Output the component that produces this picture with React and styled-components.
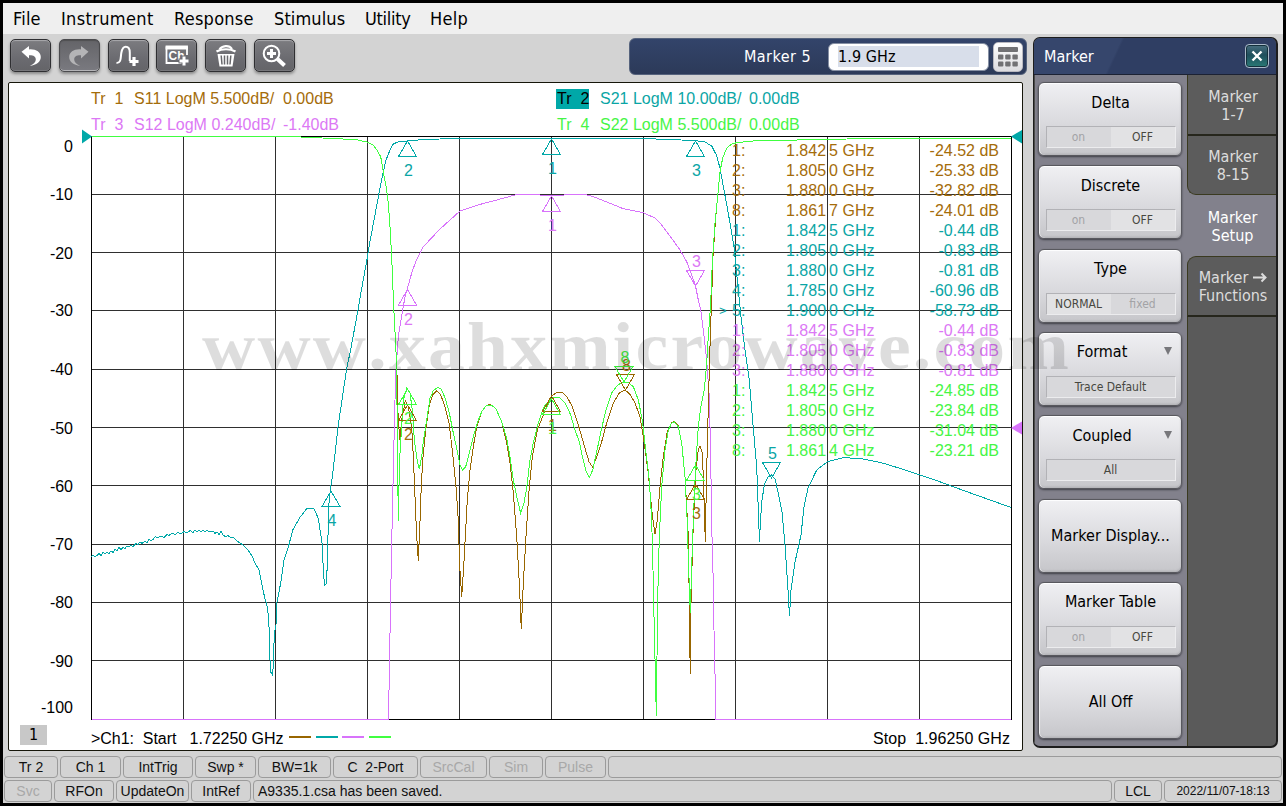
import React from "react";
import styled, { createGlobalStyle, css } from "styled-components";

const ui = '"DejaVu Sans Condensed", "DejaVu Sans", "Noto Sans", sans-serif';
const plain = '"Liberation Sans", Arial, sans-serif';

const ink = { s11: "#986600", s21: "#00a8a8", s12: "#d873fb", s22: "#40ff40" };
const label = { s11: "#a46c0a", s21: "#0aa5a5", s12: "#dc78f5", s22: "#46f546" };

const GlobalStyle = createGlobalStyle`
  * { box-sizing: border-box; }
  body { margin: 0; background: #000; }
  button { font: inherit; padding: 0; margin: 0; }
`;

const Frame = styled.div`
  position: relative;
  width: 1286px;
  height: 806px;
  padding: 3px;
  background: #000;
  overflow: hidden;
  font-family: ${ui};
`;

const Screen = styled.div`
  display: flex;
  flex-direction: column;
  width: 1280px;
  height: 800px;
  background: #d3d3d3;
`;

const MenuBar = styled.nav`
  display: flex;
  gap: 20px;
  height: 31px;
  padding-left: 10px;
  background: #efefef;
`;

const MenuItem = styled.span`
  width: ${(p) => p.$w}px;
  font-size: 18px;
  line-height: 31px;
  color: #000;
  white-space: nowrap;
  letter-spacing: ${(p) => p.$track || 0}px;
`;

const Main = styled.div`
  display: flex;
  height: 719px;
`;

const Workspace = styled.main`
  width: 1030px;
  display: flex;
  flex-direction: column;
`;

const Toolbar = styled.div`
  display: flex;
  height: 48px;
  padding: 4px 6px 0 7px;
  justify-content: space-between;
`;

const Tools = styled.div`
  display: flex;
  gap: 7.8px;
  padding-top: 1px;
`;

const Tool = styled.button`
  width: 41px;
  height: 33px;
  border: 1px solid ${(p) => (p.$pressed ? "#4b4b4e" : "#2f2f32")};
  border-radius: 5px;
  background: ${(p) =>
    p.$pressed
      ? "linear-gradient(#646468, #7a7a80)"
      : "linear-gradient(#7c7c80, #6b6b70 60%, #646468)"};
  box-shadow: inset 0 1px 1px ${(p) => (p.$pressed ? "#4f4f52" : "#aaaaad")},
    inset 0 -1px 0 ${(p) => (p.$pressed ? "#b5b5b8" : "#77777b")}, 0 2px 3px rgba(0, 0, 0, 0.35);
  display: flex;
  align-items: center;
  justify-content: center;
`;

const EntryBar = styled.div`
  display: flex;
  align-items: center;
  width: 398px;
  height: 37px;
  padding-right: 3px;
  border: 1px solid #56637d;
  border-radius: 6px;
  background: linear-gradient(#33446a, #2c3a59);
`;

const EntryLabel = styled.div`
  flex: 1;
  padding-right: 17px;
  text-align: right;
  font-size: 16px;
  color: #fff;
  letter-spacing: 0.45px;
`;

const EntryField = styled.div`
  width: 161px;
  height: 28px;
  padding: 2px 9px 0;
  border: 1px solid #8690a4;
  border-radius: 6px;
  background: #fff;
`;

const EntryValue = styled.div`
  height: 21px;
  line-height: 21px;
  font-size: 16px;
  letter-spacing: 0.1px;
  background: #d8deea;
  color: #000;
`;

const Keypad = styled.button`
  width: 30px;
  height: 30px;
  margin-left: 4px;
  border: 1px solid #b9b9c0;
  border-radius: 5px;
  background: linear-gradient(#fff, #dcdce0);
  display: flex;
  align-items: center;
  justify-content: center;
`;

const ChartWindow = styled.section`
  width: 1015px;
  height: 669px;
  margin-left: 5px;
  border: 1px solid #16160a;
  border-radius: 2px;
  background: #fff;
  font-family: ${plain};
  font-size: 16px;
`;

const Legend = styled.div`
  display: grid;
  grid-template-columns: 466px 1fr;
  grid-auto-rows: 26px;
  height: 47px;
  padding: 3px 0 0 82px;
`;

const LegendEntry = styled.div`
  display: flex;
  align-items: center;
  color: ${(p) => label[p.$trace]};
  white-space: pre;
`;

const LegendName = styled.span`
  width: 33px;
  margin-right: 11px;
  height: 20px;
  line-height: 20px;
  padding-left: 1px;
  margin-left: -1px;
  ${(p) => p.$active && css`background: #00a8a8; color: #000;`}
`;

const Scale = styled.span`
  width: 149px;
`;

const Plot = styled.div`
  position: relative;
  height: 593px;
  svg { display: block; overflow: visible; }
`;

const Readout = styled.div`
  position: absolute;
  left: 711px;
  top: 11px;
  width: 279px;
`;

const ReadoutRow = styled.div`
  display: grid;
  grid-template-columns: 12px 54px 43px 13.5px 1fr auto;
  height: 20px;
  line-height: 20px;
  color: ${(p) => label[p.$trace]};
  white-space: pre;
`;

const ActiveMark = styled.span`
  margin-left: -1px;
  font-size: 13px;
`;

const ChartFooter = styled.div`
  display: flex;
  align-items: center;
  height: 27px;
  padding: 4px 12px 0 11px;
  color: #000;
  white-space: pre;
`;

const ChannelTag = styled.span`
  width: 27px;
  height: 20px;
  margin: -8px 44px 0 0;
  line-height: 20px;
  text-align: center;
  background: #c8c8c8;
  font-family: ${ui};
`;

const Start = styled.span`
  width: 198px;
  letter-spacing: -0.04px;
`;

const Dash = styled.i`
  width: 22px;
  height: 2px;
  margin-right: 4.6px;
  margin-top: -3px;
  background: ${(p) => ink[p.$trace]};
`;

const Stop = styled.span`
  margin-left: auto;
  letter-spacing: 0.05px;
`;

const Panel = styled.aside`
  width: 245px;
  height: 711px;
  margin-top: 3px;
  border: 1px solid #1d1d1d;
  border-width: 1px 2px 2px 1px;
  border-radius: 7px;
  background: #5a5a5a;
  display: flex;
  flex-direction: column;
  overflow: hidden;
`;

const PanelHead = styled.header`
  display: flex;
  align-items: center;
  justify-content: space-between;
  height: 37px;
  padding: 0 7px 0 10px;
  border-bottom: 1px solid #1c2233;
  background: linear-gradient(115deg, #36466c 0 34%, #2f3e63 35%);
  color: #fff;
  font-size: 16px;
`;

const Close = styled.button`
  width: 24px;
  height: 24px;
  border: 1px solid #a9b9c8;
  border-radius: 4px;
  background: linear-gradient(#4a6f80, #1f4f5c 45%, #2a7a76);
  box-shadow: inset 0 0 0 1px #14303c;
  display: flex;
  align-items: center;
  justify-content: center;
`;

const PanelBody = styled.div`
  display: flex;
  flex: 1;
`;

const SoftKeys = styled.div`
  width: 154px;
  padding: 7px 5px 0 4px;
  border-right: 1px solid #3a3a20;
  border-left: 1px solid #4b4b48;
  background: #82818c;
  display: flex;
  flex-direction: column;
  gap: 9.33px;
`;

const SoftKey = styled.button`
  height: 74px;
  margin-left: -1px;
  border: 1px solid #58585e;
  border-radius: 6px;
  background: linear-gradient(#f0f0f3, #dadade 55%, #c6c6ca);
  box-shadow: inset 0 1px 1px #fff, inset 1px 0 1px #f4f4f6, inset 0 -1px 2px #a8a8ad,
    0 1px 2px #3f3f46;
  display: flex;
  flex-direction: column;
  align-items: center;
  justify-content: ${(p) => (p.$tall ? "center" : "flex-start")};
  padding-left: 1px;
  font-family: ${ui};
  font-size: 16px;
  color: #000;
`;

const KeyTitle = styled.div`
  position: relative;
  width: 100%;
  height: 20px;
  margin-top: ${(p) => (p.$tall ? 0 : 9.5)}px;
  padding-right: ${(p) => (p.$arrow ? 17 : 0)}px;
  line-height: 20px;
`;

const Caret = styled.i`
  position: absolute;
  right: 9px;
  top: 5px;
  border: 4.5px solid transparent;
  border-top: 8px solid #77777b;
  border-bottom: 0;
`;

const Value = styled.div`
  display: flex;
  width: 130px;
  height: 22px;
  margin-top: 13.5px;
  border: 1px solid;
  border-color: #b2b2b6 #ececee #ececee #b2b2b6;
  background: #d8d8db;
`;

const Choice = styled.span`
  flex: 1;
  line-height: 20px;
  font-size: 12px;
  color: ${(p) => (p.$on ? "#474740" : "#a3a3a6")};
  background: ${(p) => (p.$on && !p.$only ? "#e2e2e4" : "transparent")};
`;

const Tabs = styled.div`
  flex: 1;
`;

const Tab = styled.div`
  display: flex;
  align-items: center;
  justify-content: center;
  height: ${(p) => p.$h}px;
  padding: 2px 0 0 2px;
  font-size: 16px;
  line-height: 18px;
  text-align: center;
  color: ${(p) => (p.$active ? "#fff" : "#dcdcdc")};
  background: ${(p) => (p.$active ? "#82818c" : "#5c5c5c")};
  border-bottom: ${(p) => (p.$active ? 0 : 2)}px solid #26261c;
  ${(p) => p.$active && css`margin-left: -1px;`}
  ${(p) => p.$above && css`border-left: 1px solid #3a3a20; border-bottom: 1px solid #3a3a20; border-bottom-left-radius: 9px;`}
  ${(p) => p.$below && css`border-left: 1px solid #3a3a20; border-top: 1px solid #3a3a20; border-top-left-radius: 9px;`}
`;

const TabNotch = styled.div`
  margin-left: -1px;
  background: #82818c;
`;

const ArrowGlyph = styled.svg`
  margin-left: 5px;
  vertical-align: 0;
`;

const StatusBars = styled.footer`
  display: flex;
  flex-direction: column;
  gap: 2px;
  padding: 3px 1px 0 1px;
  font-family: ${plain};
  font-size: 14px;
`;

const StatusRow = styled.div`
  display: flex;
  gap: 2px;
`;

const Cell = styled.div`
  ${(p) => (p.$w ? css`width: ${p.$w}px;` : css`flex: 1;`)}
  height: 22px;
  line-height: 20px;
  border: 1px solid #9b9b9b;
  border-radius: 4px;
  text-align: ${(p) => (p.$left ? "left" : "center")};
  padding-left: ${(p) => (p.$left ? 4 : 0)}px;
  font-size: ${(p) => p.$size || 14}px;
  color: ${(p) => (p.$off ? "#a8a8a8" : "#111")};
  white-space: pre;
`;

const Watermark = styled.div`
  position: absolute;
  left: 202px;
  top: 307px;
  font: bold 67px/78px "Liberation Serif", serif;
  font-kerning: none;
  letter-spacing: 2px;
  transform: scaleX(1.1);
  transform-origin: 0 0;
  color: rgba(0, 0, 0, 0.135);
  white-space: nowrap;
  pointer-events: none;
`;

/* ---- trace data ---- */

const skirtLeft =
  "91.5,136.5 290,136.5 333,138.5 356.7,139.7 366.7,142 373.3,145 377.3,150.7 380.7,156.7 383.3,171.7 386.7,190 388.3,203 390,226.7 391.7,256.7 393,290 394.3,320 395.7,343 396.7,370 ";
const skirtRight =
  " 718.3,190 720,171.7 722.7,158 726.7,148 731.7,144 736.7,142.7 753,141 780,140.3 827,139.5 866.7,138.5 1011,138.5";

const traces = {
  s11:
    skirtLeft +
    "397.3,380 398,413 399.7,440 401.7,420 405.3,400.7 408.3,406.7 411.7,426.7 413.3,456.7 415,496.7 416.7,536.7 418.3,560.7 419.7,530 421,493 422.7,460 425.7,430 429.3,405 432.7,395 436.7,390.7 440.7,395 445,406.7 449,423 452.3,450 456,486.7 458.3,520 459.7,566.7 461.7,596.7 463.7,566.7 465.3,536.7 467.3,500 470,470 473.3,446.7 476.7,426.7 481.7,411.7 486,405.7 490,404.3 495.7,408.3 501.7,421.7 506.7,443 510,463 513.3,493 516.7,536.7 519.3,583 521.3,629.3 523.3,583 526,536.7 529.3,486.7 532.3,456.7 537.3,430 543.3,415 548.3,401.7 551.7,396 556.7,392.5 562.7,392.7 567.3,397.3 572.3,406.7 579.3,428.3 585,448.3 589,461.7 592.7,467.3 596.7,456.7 601.7,441.7 606.7,423 613.3,403 619.3,393 625,390 630,394.3 635,403 640,416.7 643.3,436.7 648.3,473 651.7,510 655,534.3 657.3,520 660,486.7 663.3,456.7 667.3,431.7 671.7,423 674,421.3 678.3,426 681.7,443 685,476.7 688,530 689,583 689.7,640 690.3,673.7 691,603 692.7,540 694.3,503 696,470 698.3,450 700,446 702.3,453 703.7,486.7 705.3,541.7 706.3,486.7 707.7,430 709.3,370 710.3,336.7 711.7,296.7 713,256.7 715.7,216.7" +
    skirtRight,
  s22:
    skirtLeft +
    "397.3,436.7 398.3,520.7 399,486.7 400,453 401.7,426.7 403.3,400 406.7,388.3 410,393 412.7,413 414.3,440 417.3,460.7 419.3,469.3 421.7,456.7 423.3,441.7 426.7,420 430,398.3 433.3,390.7 437.7,387.3 441,388.7 445,397.7 449.3,413 452.7,430 456.7,448.3 460,465 462.7,470 465.7,466.7 470,450 473.3,436.7 477.7,421.7 481.7,411.7 486,405.7 491,405 495.7,408.3 501.7,421.7 506.7,438.3 510,456.7 513.3,480 516.7,496.7 520.7,513.3 524,503 526.7,488 530,460 533.3,443 538.3,423 544,406.7 548.3,401.7 553.3,397.3 560,398 565,402.7 570.7,415 575,430 579.3,441.7 582.7,458 586,471 589.3,477.7 592.7,470 596.7,451.7 601.7,428 606,410 611.7,393 616.7,386 622.3,382 628.3,382.7 633.3,386.7 638.3,400 642.3,420 645.7,450 649.3,480 651.7,520 653,570 654.3,630 655.7,686.7 656.3,715.7 657,656.7 658,586.7 659.3,536.7 661.7,486.7 665,450 668.3,430 671.7,423 674.3,422 678.3,426.7 681.7,443 685,476.7 687,516.7 688.7,570 690.3,613 691.7,566.7 693.7,510 695.7,466.7 698.3,426.7 700.7,408 704.3,390 706.7,363 708.3,336.7 710.7,303 712.3,263 715,223" +
    skirtRight,
  s12:
    "91.5,719.5 388.5,719.5 389.7,650 391.7,543 393.7,453 395,400 396,370 398.3,336.7 401,320 405,296.7 407.3,289 411.7,273 415.7,261.7 423.3,246.7 440,229 460,211 476.7,205.3 496.7,200 515,195 523,194.5 536.7,194.7 551.7,196 570,194.5 585.7,194.5 595,197.3 606.7,202 623.3,208.7 643.3,212.7 655,218 661.7,225 671.7,238.3 680,250 686.7,261.7 695.3,285 698.3,300 701,311.7 703.3,330 706.7,360 709,393 710.3,436.7 712,536.7 713.3,583 714,630 715.3,686.7 715.7,719.5 1011,719.5",
  s21:
    "91.5,557 93,555 95,556.5 97,555.5 99,553.5 101,555.5 103,552.5 105,554 107,552 109,553.5 111,551 113,552.5 115,549 117,551 119,547.500 121,549.500 123,547.500 125,548.500 127,546 129,547 131,545 133,546.500 136,543.500 138,544.500 140,542 142,543.500 145,541 147,542.500 149,539 151,541 153,539.500 155,536.7 158,537.500 161,536 164,537.500 167,534.500 169,535.500 172,533 175,534.500 178,532.500 181,534 184,531.500 187,533 190,530.500 193,532.500 195,530 197,532 199,530.500 201,532 203,530 205,531.500 207,530.3 210,532 213,531 215,533.500 217,532 219,534.500 221,531.500 223,535 226,537 228,535.500 231,538 233,537.3 237,541 243,545 248,550 252,556 255,563 259,570 261.7,584 265,599 267.3,606.7 268.7,620 269.7,641.7 270,660 270.7,672 272.7,675 273.5,660 274.3,633 276,625 277,602 280.7,583 284,560 288.3,547.3 292.7,530 300,517.3 306.7,508.7 314,508.7 318.3,518.3 320.3,531.7 322.3,545 323.3,570 324.5,585.3 326,584 327.3,566.7 327.7,545 329,503 330.3,490 332.3,476.7 334.3,460 338.3,425 346.7,368.3 350,353 357.7,311.7 362.3,285 367.3,258 369,246.7 379,193.3 383.3,171.7 386,160 390,150 393.3,144 398.3,141.7 407.3,141 423,139.5 456.7,138.5 643,138.5 673,139.7 695,140.5 705,142 711.7,146 716.7,155.7 720,168.3 724,190 728.3,213.3 734,246.7 738.3,290 741,316.7 745,350 749.3,380 752.3,416.7 756.7,466.7 759.5,542 760.5,520 762,500 764.500,484 768,477 771.5,475 775,479 778,492 782,512 785,545 788,590 789.5,616 791,590 795,562 801,535 804,507 808,488 816.7,470 827.7,461.7 843,457.7 860,458.5 880,462.3 903,469.3 935,480 965,491 990,500 1011,507.5",
};

const markers = [
  ["s11", 1, 551.5, 396, "up"],
  ["s11", 2, 407.5, 405, "up"],
  ["s11", 3, 695.5, 484, "up"],
  ["s11", 8, 625.5, 390, "down"],
  ["s21", 1, 551.5, 139, "up"],
  ["s21", 2, 407.5, 141, "up"],
  ["s21", 3, 695.5, 141, "up"],
  ["s21", 4, 331, 491, "up"],
  ["s21", 5, 771.5, 478, "down"],
  ["s12", 1, 551.5, 196, "up"],
  ["s12", 2, 407.5, 289.5, "up"],
  ["s12", 3, 695.5, 286, "down"],
  ["s22", 1, 551.5, 399, "up"],
  ["s22", 2, 407.5, 389, "up"],
  ["s22", 3, 695.5, 465, "up"],
  ["s22", 8, 624, 382, "down"],
];

const readings = [
  ["s11", 1, "1.842", 5, "-24.52"],
  ["s11", 2, "1.805", 0, "-25.33"],
  ["s11", 3, "1.880", 0, "-32.82"],
  ["s11", 8, "1.861", 7, "-24.01"],
  ["s21", 1, "1.842", 5, "-0.44"],
  ["s21", 2, "1.805", 0, "-0.83"],
  ["s21", 3, "1.880", 0, "-0.81"],
  ["s21", 4, "1.785", 0, "-60.96"],
  ["s21", 5, "1.900", 0, "-58.73", true],
  ["s12", 1, "1.842", 5, "-0.44"],
  ["s12", 2, "1.805", 0, "-0.83"],
  ["s12", 3, "1.880", 0, "-0.81"],
  ["s22", 1, "1.842", 5, "-24.85"],
  ["s22", 2, "1.805", 0, "-23.84"],
  ["s22", 3, "1.880", 0, "-31.04"],
  ["s22", 8, "1.861", 4, "-23.21"],
];

const rowY = [136.5, 194.5, 252.5, 310.5, 369.5, 427.5, 485.5, 544.5, 602.5, 660.5, 719.5];
const axisLabelY = [152, 199.5, 258.5, 316, 375, 433.5, 491.5, 550, 608, 666.5, 713];

function MarkerSymbol({ trace, n, x, y, dir }) {
  const up = dir === "up";
  const base = up ? y + 15.5 : y - 15.5;
  return (
    <g>
      <path d={`M${x} ${y}L${x - 9} ${base}H${x + 9}Z`} fill="none" stroke={ink[trace]} shapeRendering="crispEdges" />
      <text x={x + 1} y={up ? y + 35 : y - 19.5} textAnchor="middle" fill={label[trace]}>
        {n}
      </text>
    </g>
  );
}

function PlotArea() {
  return (
    <Plot>
      <svg width="1013" height="593" viewBox="9 130 1013 593" fontFamily={plain} fontSize="16">
        <g stroke="#2f2f2f" shapeRendering="crispEdges">
          {rowY.slice(1, 10).map((y) => (
            <path key={y} d={`M91 ${y}H1012`} />
          ))}
          {[1, 2, 3, 4, 5, 6, 7, 8, 9].map((i) => (
            <path key={i} d={`M${91.5 + 92 * i} 136V720`} />
          ))}
          <rect x="91.5" y="136.5" width="920" height="583" fill="none" stroke="#000" />
        </g>
        {axisLabelY.map((y, i) => (
          <text key={y} x="73" y={y} textAnchor="end">
            {i ? -10 * i : 0}
          </text>
        ))}
        {["s12", "s21", "s11", "s22"].map((k) => (
          <polyline key={k} points={traces[k]} fill="none" stroke={ink[k]} shapeRendering="crispEdges" />
        ))}
        {markers.map(([t, n, x, y, d], i) => (
          <MarkerSymbol key={i} trace={t} n={n} x={x} y={y} dir={d} />
        ))}
        <path d="M82 129.5L92 136.5L82 143.5Z" fill={ink.s21} />
        <path d="M1022 130L1011 136.5L1022 143.5Z" fill={ink.s21} />
        <path d="M1022 421.5L1011 428L1022 434.5Z" fill={ink.s12} />
      </svg>
      <Readout>
        {readings.map(([t, n, f, d, v, active], i) => (
          <ReadoutRow key={i} $trace={t}>
            <ActiveMark>{active ? ">" : ""}</ActiveMark>
            <span>{n}:</span>
            <span>{f}</span>
            <span>{d}</span>
            <span>GHz</span>
            <span>{v} dB</span>
          </ReadoutRow>
        ))}
      </Readout>
    </Plot>
  );
}

const legend = [
  ["s11", 1, "S11 LogM 5.500dB/", "0.00dB"],
  ["s21", 2, "S21 LogM 10.00dB/", "0.00dB"],
  ["s12", 3, "S12 LogM 0.240dB/", "-1.40dB"],
  ["s22", 4, "S22 LogM 5.500dB/", "0.00dB"],
];

function Chart() {
  return (
    <ChartWindow>
      <Legend>
        {legend.map(([t, n, scale, ref]) => (
          <LegendEntry key={t} $trace={t}>
            <LegendName $active={n === 2}>{`Tr  ${n}`}</LegendName>
            <Scale>{scale}</Scale>
            <span>{ref}</span>
          </LegendEntry>
        ))}
      </Legend>
      <PlotArea />
      <ChartFooter>
        <ChannelTag>1</ChannelTag>
        <Start>{">Ch1:  Start   1.72250 GHz"}</Start>
        <Dash $trace="s11" />
        <Dash $trace="s21" />
        <Dash $trace="s12" />
        <Dash $trace="s22" />
        <Stop>{"Stop  1.96250 GHz"}</Stop>
      </ChartFooter>
    </ChartWindow>
  );
}

/* ---- toolbar glyphs ---- */

const Glyph = ({ children }) => (
  <svg width="30" height="26" viewBox="0 0 30 26" fill="none">
    {children}
  </svg>
);

const undoPath = "M5.500 8.800L13 3v3.400C19.5 5.800 24.8 8.800 24.8 14c0 4.800-4.400 8-11 8.800 4-1.600 6-3.700 6-6.300 0-3-2.500-4.400-6.800-4.200v3.200Z";

const tools = [
  { name: "undo", art: <path d={undoPath} fill="#fff" /> },
  { name: "redo", pressed: true, art: <path d={undoPath} fill="#b4b4b6" transform="translate(30 0) scale(-1 1)" /> },
  {
    name: "add trace",
    art: (
      <>
        <path d="M3.500 20C8.500 20 7.500 14.500 8.300 10S10.500 3.800 12.800 3.800s4 1.700 4 6v8.200" stroke="#fff" strokeWidth="2" />
        <path d="M21 14v9M16.500 18.500h9" stroke="#fff" strokeWidth="3.200" />
      </>
    ),
  },
  {
    name: "add channel",
    art: (
      <>
        <path d="M20 20H4.500V4.500H25V12" stroke="#fff" strokeWidth="1.800" />
        <path d="M3.600 2.500h22.300v4H3.600z" fill="#fff" />
        <text x="6.500" y="16.500" fontFamily={plain} fontSize="12" fontWeight="bold" fill="#fff">Ch</text>
        <path d="M22 12.500v11M16.500 18h11" stroke="#6b6b70" strokeWidth="5" />
        <path d="M22 13.500v9M17.500 18h9" stroke="#fff" strokeWidth="3" />
      </>
    ),
  },
  {
    name: "delete",
    art: (
      <>
        <path d="M8.500 6.500C11 2.500 18 1.500 21 6" stroke="#fff" strokeWidth="2.200" />
        <path d="M5.500 8.500C11 5.500 19 5.500 24.500 8.500" stroke="#fff" strokeWidth="2.200" />
        <path d="M6.500 11H23.500L21.500 23.500H8.500Z" fill="#fff" />
        <path d="M10.200 12.500L11 21.500M13.500 12.500V21.500M16.500 12.500V21.500M19.800 12.500L19 21.500" stroke="#67676b" strokeWidth="1.500" />
      </>
    ),
  },
  {
    name: "zoom",
    art: (
      <>
        <circle cx="12.500" cy="10.500" r="7.800" stroke="#fff" strokeWidth="2" />
        <path d="M12.500 6v9M8 10.500h9" stroke="#fff" strokeWidth="3" />
        <path d="M18.500 16L25.500 22.500" stroke="#fff" strokeWidth="4" />
      </>
    ),
  },
];

const menus = [
  ["File", 28, 0.2],
  ["Instrument", 93, 0.35],
  ["Response", 80, 0.25],
  ["Stimulus", 71, 0.1],
  ["Utility", 45, -0.3],
  ["Help", 38, 0.3],
];

function Key({ title, options, on, arrow }) {
  const tall = !options;
  return (
    <SoftKey $tall={tall}>
      <KeyTitle $tall={tall} $arrow={arrow}>
        {title}
        {arrow && <Caret />}
      </KeyTitle>
      {options && (
        <Value>
          {options.map((o, i) => (
            <Choice key={o} $on={i === on} $only={options.length === 1}>
              {o}
            </Choice>
          ))}
        </Value>
      )}
    </SoftKey>
  );
}

export default function App() {
  return (
    <Frame>
      <GlobalStyle />
      <Screen>
        <MenuBar>
          {menus.map(([m, w, track]) => (
            <MenuItem key={m} $w={w} $track={track}>{m}</MenuItem>
          ))}
        </MenuBar>
        <Main>
          <Workspace>
            <Toolbar>
              <Tools>
                {tools.map((t) => (
                  <Tool key={t.name} aria-label={t.name} $pressed={t.pressed}>
                    <Glyph>{t.art}</Glyph>
                  </Tool>
                ))}
              </Tools>
              <EntryBar>
                <EntryLabel>Marker 5</EntryLabel>
                <EntryField>
                  <EntryValue>1.9 GHz</EntryValue>
                </EntryField>
                <Keypad aria-label="keypad">
                  <svg width="20" height="20" viewBox="0 0 20 20" fill="#717174">
                    <rect x="0" y="0" width="20" height="5" rx="1" />
                    {[0, 7.2, 14.4].map((x) =>
                      [7.6, 14.4].map((y) => <rect key={`${x}-${y}`} x={x} y={y} width="5.4" height="5" rx="1" />)
                    )}
                  </svg>
                </Keypad>
              </EntryBar>
            </Toolbar>
            <Chart />
          </Workspace>
          <Panel>
            <PanelHead>
              <span>Marker</span>
              <Close aria-label="close">
                <svg width="12" height="12" viewBox="0 0 12 12">
                  <path d="M1.500 1.500L10.500 10.500M10.500 1.500L1.500 10.500" stroke="#fff" strokeWidth="2.400" />
                </svg>
              </Close>
            </PanelHead>
            <PanelBody>
              <SoftKeys>
                <Key title="Delta" options={["on", "OFF"]} on={1} />
                <Key title="Discrete" options={["on", "OFF"]} on={1} />
                <Key title="Type" options={["NORMAL", "fixed"]} on={0} />
                <Key title="Format" options={["Trace Default"]} on={0} arrow />
                <Key title="Coupled" options={["All"]} on={0} arrow />
                <Key title="Marker Display..." />
                <Key title="Marker Table" options={["on", "OFF"]} on={1} />
                <Key title="All Off" />
              </SoftKeys>
              <Tabs>
                <Tab $h={61}>Marker<br />1-7</Tab>
                <TabNotch>
                  <Tab $h={59} $above>Marker<br />8-15</Tab>
                </TabNotch>
                <Tab $h={61} $active>Marker<br />Setup</Tab>
                <TabNotch>
                  <Tab $h={61} $below>
                    <span>
                      Marker
                      <ArrowGlyph width="14" height="11" viewBox="0 0 14 11" fill="none">
                        <path d="M0 5.500H12M8.500 1.500L12.500 5.500L8.500 9.500" stroke="#dcdcdc" strokeWidth="2" />
                      </ArrowGlyph>
                      <br />
                      Functions
                    </span>
                  </Tab>
                </TabNotch>
              </Tabs>
            </PanelBody>
          </Panel>
        </Main>
        <StatusBars>
          <StatusRow>
            <Cell $w={54}>Tr 2</Cell>
            <Cell $w={61}>Ch 1</Cell>
            <Cell $w={70}>IntTrig</Cell>
            <Cell $w={61}>Swp *</Cell>
            <Cell $w={73}>BW=1k</Cell>
            <Cell $w={85}>{"C  2-Port"}</Cell>
            <Cell $w={67} $off>SrcCal</Cell>
            <Cell $w={54} $off>Sim</Cell>
            <Cell $w={61} $off>Pulse</Cell>
            <Cell />
          </StatusRow>
          <StatusRow>
            <Cell $w={48} $off>Svc</Cell>
            <Cell $w={60}>RFOn</Cell>
            <Cell $w={73}>UpdateOn</Cell>
            <Cell $w={60}>IntRef</Cell>
            <Cell $left>A9335.1.csa has been saved.</Cell>
            <Cell $w={48}>LCL</Cell>
            <Cell $w={118} $size={12}>2022/11/07-18:13</Cell>
          </StatusRow>
        </StatusBars>
      </Screen>
      <Watermark>www.xahxmicrowave.com</Watermark>
    </Frame>
  );
}
